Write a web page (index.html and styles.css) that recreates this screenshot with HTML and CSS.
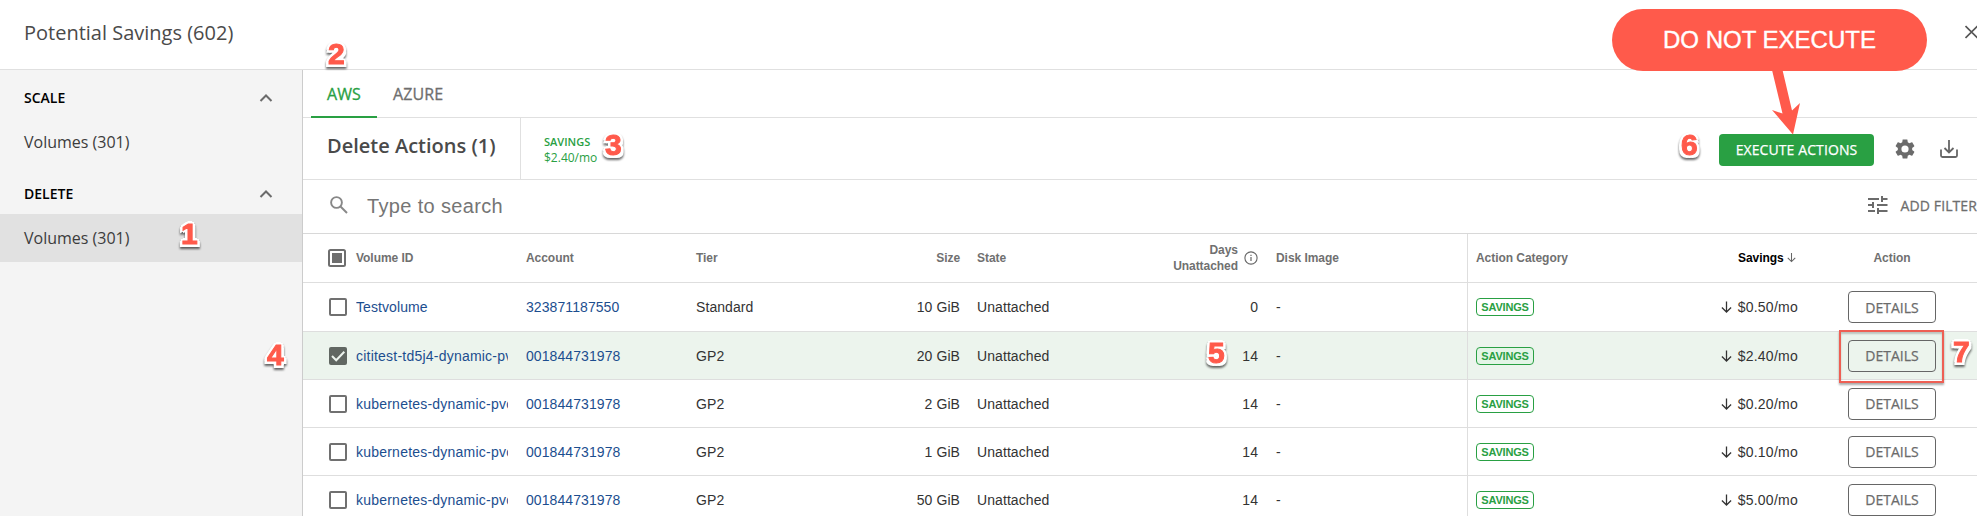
FILE: index.html
```
<!DOCTYPE html>
<html lang="en">
<head>
<meta charset="utf-8">
<title>Potential Savings</title>
<link rel="stylesheet" href="styles.css">
</head>
<body>
<svg class="defs" width="0" height="0" aria-hidden="true">
  <symbol id="up" viewBox="0 0 14 10"><path d="M1.500 8 7 2.500 12.500 8" fill="none" stroke="#6b6b6b" stroke-width="2"/></symbol>
  <symbol id="down" viewBox="0 0 12 14"><path d="M6 1v11M1 7.500l5 5 5-5" fill="none" stroke="currentColor" stroke-width="1.400"/></symbol>
</svg>
<div class="page">
  <header class="top">
    <h1 class="title">Potential Savings (602)</h1>
    <svg class="close" width="12" height="14" viewBox="0 0 12 14"><path d="M.5 1l12 12M.5 13l12-12" stroke="#555" stroke-width="1.700"/></svg>
  </header>
  <div class="body">
    <nav class="side">
      <div class="group"><span>SCALE</span><svg width="14" height="10"><use href="#up"/></svg></div>
      <a class="item">Volumes (301)</a>
      <div class="group"><span>DELETE</span><svg width="14" height="10"><use href="#up"/></svg></div>
      <a class="item active">Volumes (301)</a>
    </nav>
    <main class="main">
      <div class="tabs"><a class="tab on">AWS</a><a class="tab">AZURE</a></div>
      <div class="bar">
        <h2 class="heading">Delete Actions (1)</h2>
        <div class="sum"><b>SAVINGS</b><span>$2.40/mo</span></div>
        <div class="tools">
          <button class="exec">EXECUTE ACTIONS</button>
          <svg class="gear" width="24" height="24" viewBox="0 0 24 24"><path fill="#6b6b6b" d="M19.140 12.940c.04-.3.060-.610.060-.940 0-.320-.020-.640-.070-.940l2.030-1.580c.180-.140.230-.410.120-.610l-1.920-3.320c-.120-.220-.370-.290-.590-.220l-2.390.960c-.5-.380-1.030-.7-1.620-.940l-.360-2.540c-.040-.240-.240-.410-.480-.410h-3.840c-.240 0-.430.170-.470.410l-.360 2.540c-.590.240-1.130.570-1.620.940l-2.390-.960c-.220-.080-.470 0-.590.220L2.740 8.870c-.120.210-.080.470.120.610l2.030 1.580c-.050.3-.090.630-.090.940s.020.640.070.940l-2.030 1.580c-.180.140-.230.410-.120.610l1.920 3.320c.120.220.370.290.590.220l2.390-.960c.5.380 1.030.7 1.620.940l.360 2.540c.050.240.240.410.480.410h3.840c.240 0 .440-.170.470-.410l.360-2.540c.590-.240 1.130-.560 1.620-.940l2.390.960c.220.080.470 0 .590-.220l1.920-3.320c.120-.220.070-.470-.120-.610l-2.010-1.580zM12 15.600a3.600 3.600 0 1 1 0-7.200 3.600 3.600 0 0 1 0 7.200z"/></svg>
          <svg class="dl" width="18" height="18" viewBox="0 0 18 18"><path d="M1 9.500V15.500Q1 17 2.500 17h13q1.500 0 1.500-1.500V9.500M9 0v12M4.500 8 9 12.500 13.500 8" fill="none" stroke="#666" stroke-width="1.800"/></svg>
        </div>
      </div>
      <div class="search">
        <svg class="mag" width="18" height="18" viewBox="0 0 18 18"><g fill="none" stroke="#888" stroke-width="1.900"><circle cx="6.500" cy="6.500" r="5.400"/><path d="M10.500 10.500l6.500 6.500"/></g></svg>
        <span class="hint">Type to search</span>
        <svg class="tune" width="20" height="18" viewBox="0 0 20 18"><path d="M0 3h11M15 3h4.500M14 0v6M0 9h5M9 9h10.500M5 6v6M0 15h7M10 15h9.500M10 12v6" fill="none" stroke="#6b6b6b" stroke-width="2"/></svg>
        <span class="add">ADD FILTER</span>
      </div>
      <div class="row head">
        <div class="chk"><svg width="18" height="18" viewBox="0 0 18 18"><rect x="1" y="1" width="16" height="16" rx="1.500" fill="none" stroke="#6e6e6e" stroke-width="2"/><path d="M4 4h10v10H4z" fill="#6e6e6e"/></svg></div>
        <div>Volume ID</div><div>Account</div><div>Tier</div><div class="num">Size</div><div class="state">State</div>
        <div class="days"><span>Days<br>Unattached</span><svg width="14" height="14" viewBox="0 0 14 14"><circle cx="7" cy="7" r="6.100" fill="none" stroke="#666" stroke-width="1.100"/><path d="M7 6v4M7 3.800v1.200" stroke="#666" stroke-width="1.200"/></svg></div>
        <div class="disk">Disk Image</div><div class="cat">Action Category</div>
        <div class="sorted">Savings <svg width="9" height="11"><use href="#down"/></svg></div><div class="act">Action</div>
      </div>
      <div class="row first">
        <div class="chk"><i class="box"></i></div><div class="link">Testvolume</div><div class="link">323871187550</div><div>Standard</div><div class="num">10 GiB</div><div class="state">Unattached</div><div class="num">0</div><div class="disk">-</div><div class="cat"><span class="pill">SAVINGS</span></div><div class="save"><svg width="11" height="14"><use href="#down"/></svg>$0.50/mo</div><div class="act"><button class="details">DETAILS</button></div>
      </div>
      <div class="row picked">
        <div class="chk"><svg width="18" height="18" viewBox="0 0 18 18"><rect width="18" height="18" rx="2" fill="#616762"/><path d="M3 9l4.200 4.200L15.300 4.800" fill="none" stroke="#edf4ee" stroke-width="2"/></svg></div><div class="link long">cititest-td5j4-dynamic-pv</div><div class="link">001844731978</div><div>GP2</div><div class="num">20 GiB</div><div class="state">Unattached</div><div class="num">14</div><div class="disk">-</div><div class="cat"><span class="pill">SAVINGS</span></div><div class="save"><svg width="11" height="14"><use href="#down"/></svg>$2.40/mo</div><div class="act"><button class="details">DETAILS</button></div>
      </div>
      <div class="row">
        <div class="chk"><i class="box"></i></div><div class="link long">kubernetes-dynamic-pvc</div><div class="link">001844731978</div><div>GP2</div><div class="num">2 GiB</div><div class="state">Unattached</div><div class="num">14</div><div class="disk">-</div><div class="cat"><span class="pill">SAVINGS</span></div><div class="save"><svg width="11" height="14"><use href="#down"/></svg>$0.20/mo</div><div class="act"><button class="details">DETAILS</button></div>
      </div>
      <div class="row">
        <div class="chk"><i class="box"></i></div><div class="link long">kubernetes-dynamic-pvc</div><div class="link">001844731978</div><div>GP2</div><div class="num">1 GiB</div><div class="state">Unattached</div><div class="num">14</div><div class="disk">-</div><div class="cat"><span class="pill">SAVINGS</span></div><div class="save"><svg width="11" height="14"><use href="#down"/></svg>$0.10/mo</div><div class="act"><button class="details">DETAILS</button></div>
      </div>
      <div class="row">
        <div class="chk"><i class="box"></i></div><div class="link long">kubernetes-dynamic-pvc</div><div class="link">001844731978</div><div>GP2</div><div class="num">50 GiB</div><div class="state">Unattached</div><div class="num">14</div><div class="disk">-</div><div class="cat"><span class="pill">SAVINGS</span></div><div class="save"><svg width="11" height="14"><use href="#down"/></svg>$5.00/mo</div><div class="act"><button class="details">DETAILS</button></div>
      </div>
    </main>
  </div>
</div>
<!-- Walkthrough annotations drawn over the dialog -->
<div class="callout">DO NOT EXECUTE</div>
<svg class="arrow" width="30" height="66" viewBox="0 0 30 66"><path fill="#ff5a4b" d="M0 0H10.500L20 40.500 28 33 21 64.500 0 40 10.500 43.500z"/></svg>
<div class="frame"></div>
<span class="step s1">1</span><span class="step s2">2</span><span class="step s3">3</span><span class="step s4">4</span><span class="step s5">5</span><span class="step s6">6</span><span class="step s7">7</span>
</body>
</html>
```

FILE: styles.css
```
* { box-sizing: border-box; }
body { margin: 0; height: 516px; overflow: hidden; position: relative; background: #fff; font-family: "Open Sans", sans-serif; color: #333; }
h1, h2 { margin: 0; }
.defs { position: absolute; }
.page { width: 1977px; height: 516px; overflow: hidden; display: flex; flex-direction: column; }
.top { height: 70px; flex: none; border-bottom: 1px solid #e0e0e0; display: flex; justify-content: space-between; align-items: center; padding-left: 24px; }
.title { font-size: 20px; font-weight: 400; color: #4a4a4a; line-height: 28px; margin-top: -4px; }
.close { margin-top: -5px; }
.body { display: flex; height: 446px; }
.side { width: 303px; flex: none; background: #f4f4f4; border-right: 1px solid #ccc; }
.group { height: 48px; padding: 7px 29px 0 24px; display: flex; align-items: center; justify-content: space-between; font-size: 14px; font-weight: 600; color: #000; }
.item { display: block; height: 48px; line-height: 48px; padding-left: 24px; font-size: 16px; color: #3c3c3c; }
.item.active { background: #e1e1e1; }
.main { width: 1674px; flex: none; }
.tabs { height: 48px; border-bottom: 1px solid #e0e0e0; display: flex; padding-left: 8px; }
.tab { height: 48px; line-height: 48px; padding: 0 16px; font-size: 16px; font-weight: 500; color: #6e6e6e; letter-spacing: .1px; -webkit-text-stroke: .3px; }
.tab.on { color: #29a043; border-bottom: 2px solid #29a043; }
.bar { height: 62px; border-bottom: 1px solid #e0e0e0; display: flex; }
.heading { width: 218px; border-right: 1px solid #e0e0e0; padding: 14px 0 0 24px; font-size: 20px; line-height: 28px; font-weight: 600; color: #4a4a4a; }
.sum { padding: 16px 0 0 23px; font-size: 12px; line-height: 16px; color: #29a043; display: flex; flex-direction: column; }
.sum b { font-size: 11px; font-weight: 600; }
.tools { margin-left: auto; display: flex; align-items: center; padding: 2px 19px 0 0; }
.exec { width: 155px; height: 32px; border: 0; border-radius: 4px; background: #29a043; color: #fff; font: 500 14px "Open Sans", sans-serif; padding: 0; letter-spacing: .1px; -webkit-text-stroke: .25px; }
.gear { margin: -2px 23px 0 19px; }
.dl { margin-top: -2px; }
.search { height: 54px; border-bottom: 1px solid #d8d8d8; display: flex; align-items: center; }
.mag { margin: -4px 19px 0 27px; }
.hint { font: 20px "Liberation Sans", sans-serif; color: #757575; letter-spacing: .35px; }
.tune { margin: -3px 13px 0 auto; }
.add { font-size: 14px; font-weight: 500; color: #6e6e6e; letter-spacing: .1px; margin-top: -3px; -webkit-text-stroke: .3px; }
.row { height: 48px; display: grid; grid-template-columns: 53px 170px 170px 130px 134px 150px 148px 209px 200px 131px 179px; align-items: center; border-bottom: 1px solid #dedede; font: 14px "Liberation Sans", sans-serif; letter-spacing: .08px; }
.head { height: 49px; font-size: 12px; font-weight: 700; color: #707070; line-height: 16px; letter-spacing: -.05px; }
.first { height: 49px; }
.picked { background: #ecf4ed; }
.chk { padding-left: 26px; height: 18px; }
.head .chk { padding-left: 25px; }
.box { display: block; width: 18px; height: 18px; border: 2px solid #707070; border-radius: 2px; background: #fff; }
.link { color: #1c4e8f; white-space: nowrap; overflow: hidden; margin-right: 18px; }
.long { letter-spacing: .22px; }
.num { text-align: right; }
.state { padding-left: 17px; }
.days { display: flex; justify-content: flex-end; align-items: center; gap: 6px; text-align: right; }
.disk { padding-left: 18px; }
.cat { align-self: stretch; display: flex; align-items: center; border-left: 1px solid #dedede; padding-left: 8px; }
.pill { height: 18px; width: 58px; border: 1px solid #29a043; border-radius: 4px; color: #29a043; background: #fff; font-size: 11px; font-weight: 700; line-height: 16px; letter-spacing: -.2px; text-align: center; }
.picked .pill { background: #e4f5e7; }
.save { display: flex; justify-content: flex-end; align-items: center; gap: 6px; letter-spacing: .25px; }
.sorted { color: #000; text-align: right; padding-right: 2px; }
.sorted svg { color: #666; vertical-align: -1px; }
.act { padding-left: 50px; }
.head .act { width: 138px; text-align: center; }
.details { display: block; width: 88px; height: 32px; padding: 0; background: transparent; border: 1px solid #666; border-radius: 4px; font: 500 14px "Open Sans", sans-serif; color: #6b6b6b; -webkit-text-stroke: .25px; }
.callout { position: absolute; left: 1612px; top: 9px; width: 315px; height: 62px; border-radius: 31px; background: #ff5a4b; color: #fff; font: 24px/61px "Liberation Sans", sans-serif; text-align: center; -webkit-text-stroke: .4px; }
.arrow { position: absolute; left: 1772px; top: 70px; }
.frame { position: absolute; left: 1839px; top: 330px; width: 105px; height: 53px; border: 2px solid #ee5f54; box-shadow: 0 2px 2px #0005, inset 0 2px 2px #0003; }
.step { position: absolute; font: 700 30px/34px "Liberation Sans", sans-serif; color: #ff5a4b; -webkit-text-stroke: 1px #ff5a4b; text-shadow: 3px 0 #fff, -3px 0 #fff, 0 3px #fff, 0 -3px #fff, 2px 2px #fff, -2px 2px #fff, 2px -2px #fff, -2px -2px #fff, 3px 3px #fff, -3px 3px #fff; filter: drop-shadow(0 2px 1px #0009); }
.s1 { left: 181px; top: 217px; }
.s2 { left: 328px; top: 37px; }
.s3 { left: 605px; top: 128px; }
.s4 { left: 267px; top: 338px; }
.s5 { left: 1208px; top: 336px; }
.s6 { left: 1681px; top: 128px; }
.s7 { left: 1953px; top: 335px; }
```
